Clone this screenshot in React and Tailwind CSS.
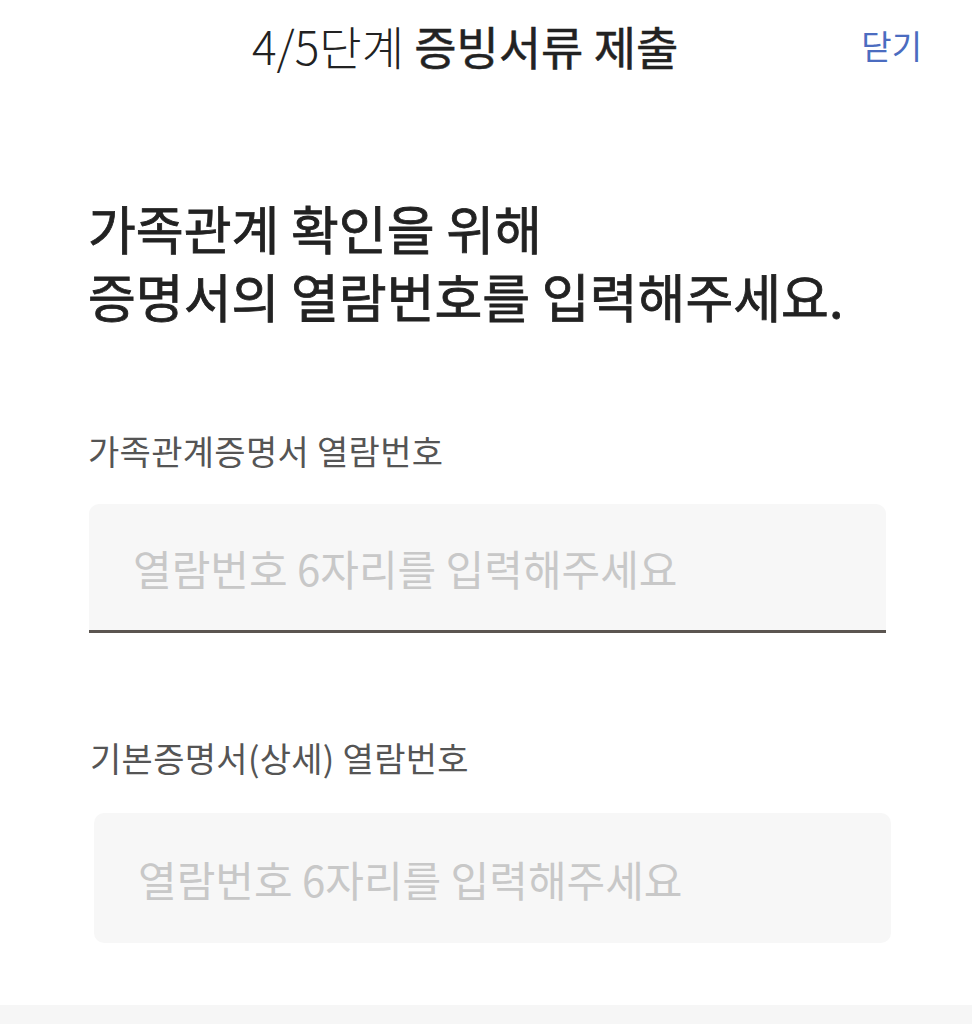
import { useState } from "react"

const font = { fontFamily: '"Noto Sans CJK KR", "Noto Sans", sans-serif' }

function Field({ label, value, onChange, active, shift }) {
    return (
        <div className={shift ? "pl-[94px] pr-[81px]" : "pl-[89px] pr-[86px]"}>
            <div className={`text-[34px] leading-[40px] text-[#555] tracking-[0.3px] ${shift ? "-ml-[4px]" : "-ml-[1px]"}`}>
                {label}
            </div>
            <input
                value={value}
                onChange={(e) => onChange(e.target.value)}
                placeholder="열람번호 6자리를 입력해주세요"
                className={`block w-full bg-[#f7f7f7] pl-[44px] text-[42px] text-[#222] placeholder:text-[#c8c8c8] outline-none ${
                    active ? "mt-[33px] h-[129px] rounded-t-[10px] border-b-[3px] border-[#5b5550]" : "mt-[35px] h-[130px] rounded-[10px]"
                }`}
                style={font}
            />
        </div>
    )
}

export default function App() {
    const [family, setFamily] = useState("")
    const [basic, setBasic] = useState("")

    return (
        <div className="w-[972px] h-[1024px] bg-white overflow-hidden flex flex-col" style={font}>
            <header className="h-[90px] flex items-center pl-[252px] pr-[50px]">
                <h1 className="text-[46px] leading-none text-[#222]">
                    <span className="font-light">4/5단계 </span>
                    <span className="font-normal [-webkit-text-stroke:0.5px_#222]">증빙서류 제출</span>
                </h1>
                <button className="ml-auto text-[33px] leading-none text-[#4b6cc0]">닫기</button>
            </header>

            <h2 className="mt-[104px] pl-[88px] text-[52px] leading-[68px] font-normal text-[#222] [-webkit-text-stroke:0.8px_#222]">
                가족관계 확인을 위해
                <br />
                증명서의 열람번호를 입력해주세요.
            </h2>

            <div className="mt-[101px]">
                <Field label="가족관계증명서 열람번호" value={family} onChange={setFamily} active />
            </div>

            <div className="mt-[105px]">
                <Field label="기본증명서(상세) 열람번호" value={basic} onChange={setBasic} shift />
            </div>

            <div className="mt-auto h-[19px] bg-[#f6f6f6]"></div>
        </div>
    )
}
